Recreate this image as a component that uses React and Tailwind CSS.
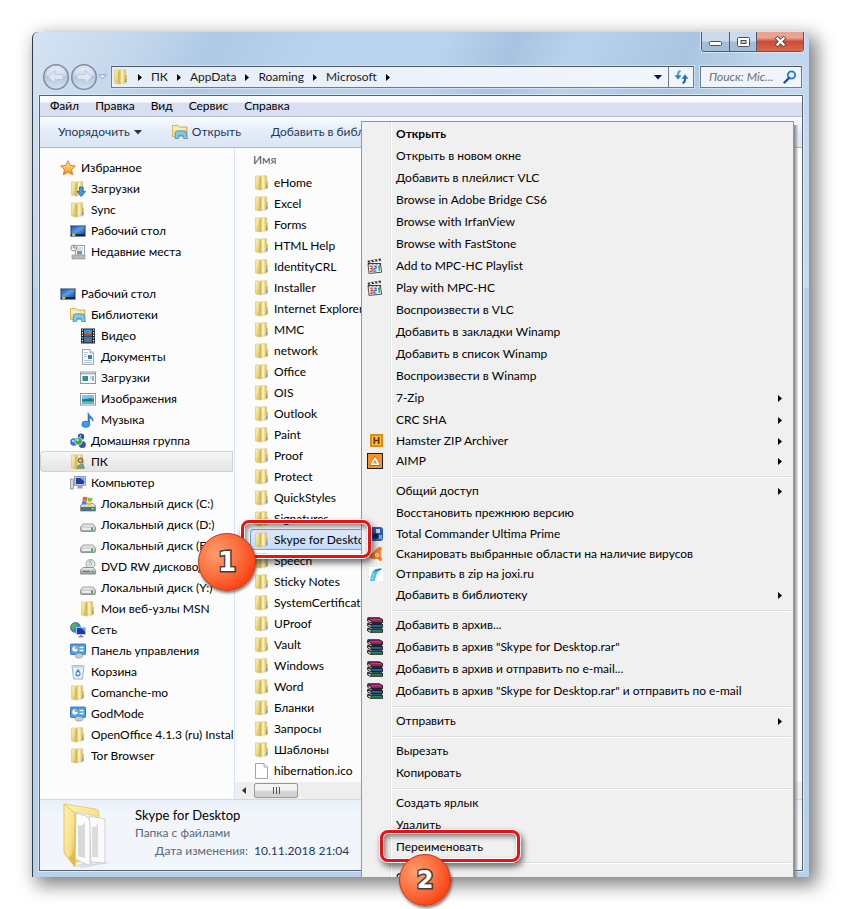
import React from "react";

function Defs() {
  return (
    <svg className="absolute size-0" aria-hidden="true">
      <defs>
        <linearGradient id="fold" x1="0" x2="1" y1="0" y2="1">
          <stop offset="0" stopColor="#fbf3b4" />
          <stop offset="0.5" stopColor="#eed981" />
          <stop offset="1" stopColor="#c9a63f" />
        </linearGradient>
        <linearGradient id="foldLight" x1="0" x2="1" y1="0" y2="0">
          <stop offset="0" stopColor="#e0c565" />
          <stop offset="0.4" stopColor="#fdf8cf" />
          <stop offset="1" stopColor="#d9bb58" />
        </linearGradient>
        <linearGradient id="screen" x1="0" x2="1" y1="0" y2="1">
          <stop offset="0" stopColor="#1f57b8" />
          <stop offset="0.5" stopColor="#5b9be8" />
          <stop offset="1" stopColor="#1c4aa0" />
        </linearGradient>
        <linearGradient id="star" x1="0" x2="0" y1="0" y2="1">
          <stop offset="0" stopColor="#fff3a0" />
          <stop offset="1" stopColor="#f58a16" />
        </linearGradient>
        <linearGradient id="drive" x1="0" x2="0" y1="0" y2="1">
          <stop offset="0" stopColor="#f6f6f6" />
          <stop offset="1" stopColor="#9c9c9c" />
        </linearGradient>
        <linearGradient id="ring" x1="0" x2="0" y1="0" y2="1">
          <stop offset="0" stopColor="#dfe9f5" />
          <stop offset="0.5" stopColor="#b7c6db" />
          <stop offset="1" stopColor="#d3e2f2" />
        </linearGradient>
        <linearGradient id="bigFold" x1="0" x2="1" y1="0" y2="1">
          <stop offset="0" stopColor="#fff3b0" />
          <stop offset="0.6" stopColor="#f7e08a" />
          <stop offset="1" stopColor="#dfb443" />
        </linearGradient>
      </defs>
    </svg>
  );
}

function Svg({ children, className = "size-4" }) {
  return (
    <svg viewBox="0 0 16 16" className={`${className} shrink-0`} aria-hidden="true">
      {children}
    </svg>
  );
}

function FolderShape() {
  return (
    <>
      <path d="M1.5 1 H7 V15 L1.5 14 Z" fill="url(#fold)" stroke="#d8c06a" strokeWidth="0.6" />
      <path d="M6.5 1.5 L8 0.8 H12.5 V14 H6.5 Z" fill="url(#foldLight)" stroke="#cdb257" strokeWidth="0.5" />
      <path d="M5 3 L7.5 1.5 V15.5 L5 14.5 Z" fill="#d9bd5c" />
      <path d="M12 6 H13.8 V13 L12 14 Z" fill="#d8ba50" />
      <path d="M12.8 10 V13" stroke="#4b9be0" strokeWidth="1" />
    </>
  );
}

const icons = {
  folder: <FolderShape />,
  downloads: (
    <>
      <FolderShape />
      <path d="M9.5 6 H13 V10.5 H15.5 L11.2 15.6 L7 10.5 H9.5 Z" fill="#3f9be8" stroke="#1763b3" strokeWidth="0.8" />
    </>
  ),
  user: (
    <>
      <FolderShape />
      <circle cx="10.5" cy="6.5" r="2.4" fill="#d9a988" stroke="#5d4630" strokeWidth="0.9" />
      <path d="M7 14.5 C7 9 14 9 14.5 14.5 Z" fill="#6fa58b" stroke="#5f7a6c" strokeWidth="0.5" />
    </>
  ),
  star: (
    <path
      d="M8 0.8 L10.2 5.4 L15.4 6 L11.6 9.5 L12.6 14.8 L8 12.1 L3.4 14.8 L4.4 9.5 L0.6 6 L5.8 5.4 Z"
      fill="url(#star)"
      stroke="#d9731c"
      strokeWidth="0.9"
    />
  ),
  desktop: (
    <>
      <rect x="0.5" y="2.5" width="15" height="11" fill="#29394f" stroke="#8c9bb0" strokeWidth="0.8" />
      <rect x="1.5" y="3.3" width="13" height="8" fill="url(#screen)" />
      <rect x="1" y="11.3" width="14" height="1.8" fill="#16222f" />
      <path d="M2 11 h2 v2 h-2z" fill="#8fd43f" />
      <path d="M4 11 h1.2 v2 h-1.2z" fill="#f3c531" />
    </>
  ),
  recent: (
    <>
      <rect x="5.5" y="1.5" width="9" height="10" fill="#fafafa" stroke="#9aa0a6" />
      <path d="M7 4 H13 M7 6 H13" stroke="#b6c3d3" />
      <rect x="7" y="7" width="5" height="3.5" fill="#5c9cd8" />
      <path d="M2 11 H15 V15 H2 Z" fill="#b8b8b8" stroke="#8d8d8d" strokeWidth="0.6" />
      <circle cx="3.8" cy="4" r="3" fill="#f4f4f4" stroke="#8a8a8a" />
      <path d="M3.8 2 V4 H5.4" stroke="#555" strokeWidth="0.8" fill="none" />
    </>
  ),
  library: (
    <>
      <path d="M0.5 1.5 H6 L7.5 3 H15 V12.5 H0.5 Z" fill="url(#fold)" stroke="#c9a941" strokeWidth="0.8" />
      <path d="M1.5 5 H14" stroke="#fff8cf" strokeWidth="1.2" />
      <path d="M3.5 8 C5 6.4 11 6.4 14 8 L15.4 14.5 H11.5 L11 11.3 H7 L6.5 14.5 H3 Z" fill="#7fc8f3" stroke="#3c8bc7" strokeWidth="0.8" />
    </>
  ),
  video: (
    <>
      <rect x="1" y="0.5" width="14" height="15" fill="#1b2229" />
      <path d="M2.4 1.5 V15 M13.6 1.5 V15" stroke="#e8eef2" strokeWidth="1.2" strokeDasharray="1.3 1.3" />
      <rect x="4" y="1.5" width="8" height="6" fill="#3f93d8" />
      <rect x="4" y="8.5" width="8" height="6" fill="#2f79bd" />
      <path d="M4 6 L7 4 L9 6.5 L12 3.5 V7.5 H4 Z M4 13 L7 11 L9 13 L12 10.5 V12 L4 14 Z" fill="#b5532c" />
    </>
  ),
  doc: (
    <>
      <path d="M2.5 0.5 H10 L13.5 4 V15.5 H2.5 Z" fill="#fbfcfd" stroke="#8f9aa5" strokeWidth="0.9" />
      <path d="M10 0.5 V4 H13.5" fill="#dde5ec" stroke="#8f9aa5" strokeWidth="0.8" />
      <path d="M4 3.5 H8 M4 5.5 H7 M4 7.5 H7 M4 11.5 H12 M4 13.5 H12" stroke="#9db3c6" strokeWidth="0.8" />
      <rect x="8" y="6" width="4" height="4" fill="#2e7fc4" />
    </>
  ),
  dlib: (
    <>
      <rect x="0.5" y="2" width="15" height="11.5" fill="#f6f8fa" stroke="#8d99a6" />
      <path d="M1 3.6 H15" stroke="#a3b3c6" strokeWidth="1.6" />
      <rect x="2.5" y="6" width="5.5" height="5" fill="#3d8a86" />
      <path d="M9.5 7 H12 M9.5 9 H12" stroke="#b4c0cc" />
      <path d="M13 6 V11" stroke="#2569b5" />
    </>
  ),
  image: (
    <>
      <rect x="0.5" y="2.5" width="15" height="11.5" fill="#fff" stroke="#8c98a4" />
      <rect x="2" y="4" width="12" height="8.5" fill="#79c3ee" />
      <path d="M2 8 C6 9.5 9 5.5 14 8.5 V12.5 H2 Z" fill="#1f7f78" />
      <path d="M2 10.5 H14 V12.5 H2 Z" fill="#5dbcd8" />
    </>
  ),
  music: (
    <>
      <path d="M8 0.5 C8.5 4 14 4.5 13 9.5 C12.5 7.2 11 6.4 9.5 6.2 V12.2 H8 Z" fill="#2c83d4" stroke="#1c5fa5" strokeWidth="0.5" />
      <ellipse cx="5.8" cy="12.2" rx="4" ry="3.2" fill="#419be6" stroke="#1c5fa5" strokeWidth="0.6" />
    </>
  ),
  homegroup: (
    <>
      <circle cx="4" cy="9" r="3.8" fill="#3c6fd0" />
      <circle cx="11" cy="3.8" r="3.2" fill="#2c4fae" />
      <circle cx="12.3" cy="11.5" r="3.5" fill="#3054b4" />
      <circle cx="8.5" cy="8.2" r="3.8" fill="#3aa646" stroke="#e8f3ff" strokeWidth="0.7" />
      <circle cx="7.6" cy="7" r="1.4" fill="#a8e5a0" />
      <circle cx="3" cy="8" r="1.2" fill="#b9d2ff" />
      <circle cx="10.4" cy="2.8" r="0.9" fill="#b9d2ff" />
    </>
  ),
  computer: (
    <>
      <rect x="0.5" y="4" width="3" height="10" fill="#d5d8dc" stroke="#7f868e" strokeWidth="0.7" />
      <rect x="4.5" y="1.5" width="11" height="9" fill="#e7e9ec" stroke="#84898f" strokeWidth="0.8" />
      <rect x="5.8" y="2.8" width="8.5" height="6.4" fill="#1c3fae" />
      <path d="M10 2.8 H14.3 V6.5 Z" fill="#7aa5ee" />
      <path d="M8 10.5 H12 L13 13.5 H7 Z" fill="#9aa0a8" />
    </>
  ),
  osdrive: (
    <>
      <path d="M0.5 9.5 L3 7.5 H13 L15.5 9.5 V15 H0.5 Z" fill="url(#drive)" stroke="#6f7378" strokeWidth="0.7" />
      <path d="M1 11 H15 V15 H1 Z" fill="#4d7380" />
      <rect x="11.5" y="12" width="2.5" height="1.6" fill="#7be04a" />
      <path d="M3 1.2 C5 0.2 6 0.8 7.6 1.4 L6.8 5 C5 4.2 4 4.2 2.4 5 Z" fill="#e8602c" />
      <path d="M8.2 1.6 C9.6 2.2 11 2.2 12.6 1.4 L11.8 5 C10 5.8 9 5.6 7.5 5 Z" fill="#7fbf3a" />
      <path d="M2.2 5.6 C4 4.8 5 5 6.7 5.6 L6 9 C4.5 8.4 3 8.4 1.6 9 Z" fill="#3f86dc" />
      <path d="M7.3 5.9 C9 6.5 10 6.4 11.6 5.7 L10.8 9 C9.4 9.8 8 9.6 6.6 9.1 Z" fill="#f4bf2d" />
    </>
  ),
  drive: (
    <>
      <path d="M0.6 10 L3 7 H13 L15.4 10 V13.5 Q15.4 14.5 14 14.5 H2 Q0.6 14.5 0.6 13.5 Z" fill="url(#drive)" stroke="#84888c" strokeWidth="0.8" />
      <path d="M2 10.8 H14 V13 H2 Z" fill="#e9ebec" />
      <rect x="11" y="10.4" width="2" height="2.8" fill="#3cb644" />
    </>
  ),
  dvd: (
    <>
      <circle cx="10.5" cy="5" r="4.5" fill="#dfe6e4" stroke="#8e9694" strokeWidth="0.8" />
      <path d="M10.5 5 L8 1.5 L12 0.8 Z" fill="#8fd7a5" />
      <circle cx="10.5" cy="5" r="1.2" fill="#fff" stroke="#888" strokeWidth="0.6" />
      <path d="M0.6 11 L3 8.5 H13 L15.4 11 V15 H0.6 Z" fill="url(#drive)" stroke="#777b7f" strokeWidth="0.8" />
      <path d="M2.5 12.3 H10" stroke="#55595d" />
      <rect x="11.5" y="11.7" width="2" height="2" fill="#3cb644" />
    </>
  ),
  network: (
    <>
      <circle cx="5.5" cy="5.5" r="5" fill="#3b86d8" stroke="#22589f" strokeWidth="0.6" />
      <path d="M2 3 C4 0.5 6 1.5 7 3 C6 5 4 5 3.4 8 C1.6 7 1 5 2 3 Z" fill="#58b947" />
      <rect x="6.5" y="5.5" width="9" height="7" fill="#1c3d9e" stroke="#c2cad4" strokeWidth="0.9" />
      <path d="M11 6 H15 V9.5 Z" fill="#6b96e4" />
      <path d="M10 13 H12 V14 H13.5 V15.5 H8.5 V14 H10 Z" fill="#8b929a" />
    </>
  ),
  control: (
    <>
      <rect x="0.5" y="1" width="15" height="10.5" rx="0.8" fill="#4aa0e6" stroke="#2568a9" strokeWidth="0.8" />
      <circle cx="5" cy="6" r="2.8" fill="#e8f4fd" />
      <path d="M5 6 V3.2 A2.8 2.8 0 0 1 7.8 6 Z" fill="#f08a1c" />
      <path d="M9.5 4.5 H13.5 M9.5 7.5 H13.5" stroke="#fff" strokeWidth="1.3" />
      <ellipse cx="9" cy="12.8" rx="4" ry="2.4" fill="#c8cdd3" stroke="#8c9299" strokeWidth="0.6" />
    </>
  ),
  bin: (
    <>
      <path d="M2 1.5 H14 L12.4 15 H3.6 Z" fill="#e8eff6" stroke="#98a8b9" strokeWidth="0.9" />
      <path d="M2 1.5 H14 L13.6 3.8 H2.4 Z" fill="#c4d2df" />
      <path d="M6 9 L8 6 L10 9 M10.4 9.5 L9 11.6 H6.6 L5.6 9.6" fill="none" stroke="#3d83d6" strokeWidth="1.3" />
    </>
  ),
  file: (
    <>
      <path d="M1.5 0.5 H10 L13.5 4 V15.5 H1.5 Z" fill="#fdfdfd" stroke="#9b9b9b" strokeWidth="0.9" />
      <path d="M10 0.5 V4 H13.5" fill="#ececec" stroke="#9b9b9b" strokeWidth="0.8" />
    </>
  ),
  mpc: (
    <>
      <path d="M0.6 2.8 L13.6 0.6 L14 2.8 L1 4.8 Z" fill="#2c2c2c" />
      <path d="M3 2.4 L4.6 4 M6.6 1.8 L8.2 3.5 M10.2 1.2 L11.8 2.9" stroke="#fff" strokeWidth="1.4" />
      <path d="M1 5.5 H13.4 L14.6 14.2 L2 15.4 Z" fill="#fff" stroke="#3a3a3a" strokeWidth="0.9" />
      <path d="M1 5.8 H14" stroke="#333" strokeWidth="1.6" strokeDasharray="2.2 1.5" />
      <path d="M2.6 8.2 H5 V13.4 H2.8 M3 10.6 H5" fill="none" stroke="#d9452c" strokeWidth="1.3" />
      <path d="M6.6 8.2 H9.1 V10.5 H7 V13.2 H9.5" fill="none" stroke="#2f6fd0" strokeWidth="1.3" />
      <path d="M11 8.8 L12.2 8 V13" fill="none" stroke="#2f9b4b" strokeWidth="1.4" />
    </>
  ),
  hamster: (
    <>
      <rect x="3" y="1" width="13" height="13" fill="#e08a1c" />
      <rect x="5" y="3" width="9" height="9" fill="#f8c23c" />
      <path d="M7.3 4 V11 M11.7 4 V11 M7.3 7.5 H11.7" stroke="#6b3407" strokeWidth="1.7" />
    </>
  ),
  aimp: (
    <>
      <rect x="0.5" y="0.5" width="15" height="15" fill="#fb9220" stroke="#1d1d1d" />
      <path d="M8 3.4 L13 12.2 H3 Z" fill="#7d6a51" stroke="#7d6a51" strokeWidth="1" strokeLinejoin="round" />
      <path d="M8 5 L11.6 11.2 H4.4 Z" fill="#e59246" stroke="#fff" strokeWidth="1.6" strokeLinejoin="round" />
    </>
  ),
  tc: (
    <>
      <rect x="3" y="1" width="13" height="14" rx="3" fill="#2f5caa" />
      <path d="M9 3 H13 V7 H9 Z" fill="#c3d3ee" />
      <circle cx="8.5" cy="10" r="2.8" fill="#12244e" />
      <path d="M12 9 H15 V13 H12 Z" fill="#7f9fd6" />
    </>
  ),
  avast: (
    <>
      <path
        d="M13.4 0.8 C15.6 1.2 15.2 3.6 13.5 5.5 C14 7.5 14 9 13.3 10.3 C15.4 12.3 15.7 14.8 13.6 15 C12 15.1 11.5 13.4 10 12.8 C8 13.4 5 13.2 3.4 12 C1.6 11 0.6 9 2.2 7.8 C3.6 6.8 5.8 7.4 6.8 6 C8.4 3.6 10.8 0.8 13.4 0.8 Z"
        fill="#f58220"
      />
      <circle cx="9.8" cy="8.8" r="1.9" fill="#fff" />
      <circle cx="9.8" cy="8.8" r="0.9" fill="#f58220" />
    </>
  ),
  joxi: (
    <>
      <rect x="2" y="1" width="14" height="14" fill="#fff" />
      <path d="M3 15 C3.5 11 4.5 9.5 5 7 C6 2.8 11 2 15 2.6 L12 5.6 C9.5 6.6 9 11 7.5 15 Z" fill="#4dbbe0" />
      <path d="M8 5 C10 3.6 12 3.2 14.5 3" stroke="#1b6f99" strokeWidth="1.2" fill="none" />
      <path d="M5 14 C6 11 6.5 9 7 7" stroke="#b9e8f6" strokeWidth="0.9" fill="none" />
    </>
  ),
  rar: (
    <>
      <path d="M0.8 0.8 H12.5 L15.6 2.6 V5.6 H4 L0.8 4 Z" fill="#9c1d68" stroke="#111" strokeWidth="0.9" />
      <path d="M0.8 6 L4 7.5 H15.6 V10.4 H4 L0.8 9 Z" fill="#1e63b4" stroke="#111" strokeWidth="0.9" />
      <path d="M0.8 11 L4 12.3 H15.6 V15.3 H4 L0.8 14 Z" fill="#1c8a57" stroke="#111" strokeWidth="0.9" />
      <path d="M1 2.4 L4 4 V6 L1 4.6 Z M1 7.2 L4 8.6 V10.6 L1 9.3 Z M1 12 L4 13.3 V15.4 L1 14.2 Z" fill="#fff" stroke="#111" strokeWidth="0.7" />
      <path d="M4 2.6 H14" stroke="#d24a96" strokeWidth="0.8" />
      <path d="M4.5 6.4 H15 M4.5 11.2 H15" stroke="#111" strokeWidth="1" />
    </>
  ),
};

const navItems = [
  { icon: "star", label: "Избранное", level: 0 },
  { icon: "downloads", label: "Загрузки", level: 1 },
  { icon: "folder", label: "Sync", level: 1 },
  { icon: "desktop", label: "Рабочий стол", level: 1 },
  { icon: "recent", label: "Недавние места", level: 1 },
  null,
  { icon: "desktop", label: "Рабочий стол", level: 0 },
  { icon: "library", label: "Библиотеки", level: 1 },
  { icon: "video", label: "Видео", level: 2 },
  { icon: "doc", label: "Документы", level: 2 },
  { icon: "dlib", label: "Загрузки", level: 2 },
  { icon: "image", label: "Изображения", level: 2 },
  { icon: "music", label: "Музыка", level: 2 },
  { icon: "homegroup", label: "Домашняя группа", level: 1 },
  { icon: "user", label: "ПК", level: 1, selected: true },
  { icon: "computer", label: "Компьютер", level: 1 },
  { icon: "osdrive", label: "Локальный диск (C:)", level: 2 },
  { icon: "drive", label: "Локальный диск (D:)", level: 2 },
  { icon: "drive", label: "Локальный диск (E:)", level: 2 },
  { icon: "dvd", label: "DVD RW дисковод", level: 2 },
  { icon: "drive", label: "Локальный диск (Y:)", level: 2 },
  { icon: "folder", label: "Мои веб-узлы MSN", level: 2 },
  { icon: "network", label: "Сеть", level: 1 },
  { icon: "control", label: "Панель управления", level: 1 },
  { icon: "bin", label: "Корзина", level: 1 },
  { icon: "folder", label: "Comanche-mo", level: 1 },
  { icon: "control", label: "GodMode", level: 1 },
  { icon: "folder", label: "OpenOffice 4.1.3 (ru) Instal", level: 1 },
  { icon: "folder", label: "Tor Browser", level: 1 },
];

const files = [
  "eHome", "Excel", "Forms", "HTML Help", "IdentityCRL", "Installer", "Internet Explorer", "MMC",
  "network", "Office", "OIS", "Outlook", "Paint", "Proof", "Protect", "QuickStyles", "Signatures",
  "Skype for Desktop", "Speech", "Sticky Notes", "SystemCertificates", "UProof", "Vault", "Windows",
  "Word", "Бланки", "Запросы", "Шаблоны", "hibernation.ico",
];

const menuItems = [
  { label: "Открыть", bold: true },
  { label: "Открыть в новом окне" },
  { label: "Добавить в плейлист VLC" },
  { label: "Browse in Adobe Bridge CS6" },
  { label: "Browse with IrfanView" },
  { label: "Browse with FastStone" },
  { label: "Add to MPC-HC Playlist", icon: "mpc" },
  { label: "Play with MPC-HC", icon: "mpc" },
  { label: "Воспроизвести в VLC" },
  { label: "Добавить в закладки Winamp" },
  { label: "Добавить в список Winamp" },
  { label: "Воспроизвести в Winamp" },
  { label: "7-Zip", sub: true },
  { label: "CRC SHA", sub: true },
  { label: "Hamster ZIP Archiver", icon: "hamster", sub: true, short: true },
  { label: "AIMP", icon: "aimp", sub: true, short: true },
  null,
  { label: "Общий доступ", sub: true },
  { label: "Восстановить прежнюю версию" },
  { label: "Total Commander Ultima Prime", icon: "tc", short: true },
  { label: "Сканировать выбранные области на наличие вирусов", icon: "avast", short: true },
  { label: "Отправить в zip на joxi.ru", icon: "joxi", short: true },
  { label: "Добавить в библиотеку", sub: true },
  null,
  { label: "Добавить в архив...", icon: "rar" },
  { label: 'Добавить в архив "Skype for Desktop.rar"', icon: "rar" },
  { label: "Добавить в архив и отправить по e-mail...", icon: "rar" },
  { label: 'Добавить в архив "Skype for Desktop.rar" и отправить по e-mail', icon: "rar" },
  null,
  { label: "Отправить", sub: true },
  null,
  { label: "Вырезать" },
  { label: "Копировать" },
  null,
  { label: "Создать ярлык" },
  { label: "Удалить" },
  { label: "Переименовать" },
  null,
  { label: "Свойства" },
];

const indent = ["pl-5", "pl-[30px]", "pl-10"];

function CrumbArrow() {
  return (
    <svg viewBox="0 0 4 7" className="h-[7px] w-1 shrink-0" aria-hidden="true">
      <path d="M0 0 L4 3.5 L0 7 Z" fill="#000" />
    </svg>
  );
}

function WindowControls() {
  return (
    <div className="mr-[5px] flex h-5 self-end overflow-hidden rounded-b border border-t-0 border-[#4f5c6b] shadow-[0_0_0_1px_#d6e5f5]">
      <button aria-label="Свернуть" className="flex w-7 items-center justify-center border-r border-[#4f5c6b] bg-linear-to-b from-[#cbdbec] from-45% to-[#a5bcd6] to-55%">
        <svg viewBox="0 0 13 5" className="h-[5px] w-[13px] translate-y-0.5">
          <rect x="0.5" y="0.5" width="12" height="4" rx="1" fill="#fff" stroke="#4a4f59" />
        </svg>
      </button>
      <button aria-label="Развернуть" className="flex w-[27px] items-center justify-center border-r border-[#4f5c6b] bg-linear-to-b from-[#cbdbec] from-45% to-[#a5bcd6] to-55%">
        <svg viewBox="0 0 13 10" className="h-2.5 w-[13px]">
          <rect x="0.5" y="0.5" width="12" height="9" rx="1" fill="#fff" stroke="#4a4f59" />
          <rect x="4" y="3.5" width="5" height="3" fill="#b7cbe1" stroke="#4a4f59" />
        </svg>
      </button>
      <button aria-label="Закрыть" className="flex w-[46px] items-center justify-center bg-linear-to-b from-[#e9a394] from-30% via-[#cc4b35] via-50% to-[#d9694c]">
        <svg viewBox="0 0 13 11" className="h-[11px] w-[13px]">
          <path d="M3.5 2.5 L9.5 8.5 M9.5 2.5 L3.5 8.5" stroke="#51424a" strokeWidth="4" strokeLinecap="square" />
          <path d="M3.5 2.5 L9.5 8.5 M9.5 2.5 L3.5 8.5" stroke="#fff" strokeWidth="2.4" strokeLinecap="square" />
        </svg>
      </button>
    </div>
  );
}

function NavButtons() {
  return (
    <div className="flex items-center">
      <button aria-label="Назад">
        <svg viewBox="0 0 28 28" className="size-7">
          <circle cx="14" cy="14" r="12.3" fill="url(#ring)" stroke="#7d8da3" strokeWidth="1.5" />
          <path d="M4 12 A10.5 10.5 0 0 1 24 12 C18 15 10 15 4 12 Z" fill="#fff" opacity="0.35" />
          <path d="M6 14 L13 7.5 V11.5 H21 V16.5 H13 V20.5 Z" fill="#dde6f1" stroke="#b5c3d5" strokeWidth="0.8" />
        </svg>
      </button>
      <button aria-label="Вперёд">
        <svg viewBox="0 0 28 28" className="size-7">
          <circle cx="14" cy="14" r="12.3" fill="url(#ring)" stroke="#7d8da3" strokeWidth="1.5" />
          <path d="M4 12 A10.5 10.5 0 0 1 24 12 C18 15 10 15 4 12 Z" fill="#fff" opacity="0.35" />
          <path d="M22 14 L15 7.5 V11.5 H7 V16.5 H15 V20.5 Z" fill="#dde6f1" stroke="#b5c3d5" strokeWidth="0.8" />
        </svg>
      </button>
      <button aria-label="Журнал">
        <svg viewBox="0 0 9 6" className="h-1.5 w-[9px]">
          <path d="M0.7 0.7 H8.3 L4.5 5 Z" fill="#dfeaf6" stroke="#8ea6c4" />
        </svg>
      </button>
    </div>
  );
}

function AddressRow() {
  return (
    <div className="mt-3.5 flex h-[22px] items-center gap-1 pr-[7px] pl-[9px]">
      <NavButtons />
      <div className="flex h-[22px] min-w-0 flex-1 items-stretch border border-[#6d7b8b] border-t-[#4e5864] bg-linear-to-r from-[#e6eef8] to-[#f1f6fb] shadow-[0_0_0_1px_#d3e2f2]">
        <div className="flex flex-1 items-center gap-[9px] pl-px">
          <Svg>{icons.folder}</Svg>
          <CrumbArrow />
          {["ПК", "AppData", "Roaming", "Microsoft"].map((c) => (
            <React.Fragment key={c}>
              <button className="leading-5 text-[#1b1b1b]">{c}</button>
              <CrumbArrow />
            </React.Fragment>
          ))}
        </div>
        <button aria-label="Предыдущие расположения" className="flex w-5 items-center justify-center">
          <svg viewBox="0 0 8 5" className="h-[5px] w-2">
            <path d="M0 0 H8 L4 4.5 Z" fill="#00105e" />
          </svg>
        </button>
        <button aria-label="Обновить" className="flex w-[25px] items-center justify-center border-l border-[#6d7b8b]">
          <svg viewBox="0 0 15 14" className="h-3.5 w-[15px]">
            <path d="M6.5 1 C4.2 1.6 3.8 3.5 4 6" fill="none" stroke="#45a0dd" strokeWidth="2" />
            <path d="M0.5 5.2 H7.6 L4 9.4 Z" fill="#2f7fc9" />
            <path d="M8.5 13 C10.8 12.4 11.3 10.5 11 8" fill="none" stroke="#1d5ca8" strokeWidth="2" />
            <path d="M7.4 8.8 H14.5 L11 4.6 Z" fill="#2a6fbb" />
          </svg>
        </button>
      </div>
      <label className="ml-0.5 flex h-[22px] w-[102px] items-center border border-[#6d7b8b] border-t-[#4e5864] bg-[#eff5fb] pr-1 pl-2 shadow-[0_0_0_1px_#d3e2f2]">
        <input aria-label="Поиск" placeholder="Поиск: Mic..." className="w-0 min-w-0 flex-1 bg-transparent italic outline-none placeholder:text-[#6e6e6e]" />
        <svg viewBox="0 0 14 14" className="size-3.5 shrink-0">
          <circle cx="8.5" cy="5" r="3.7" fill="#dcecfa" stroke="#2f78c8" strokeWidth="1.8" />
          <path d="M6 8 L1.5 12.5" stroke="#1f4fa0" strokeWidth="2.4" strokeLinecap="round" />
        </svg>
      </label>
    </div>
  );
}

function Toolbar() {
  return (
    <div className="flex h-[31px] items-center overflow-hidden border-b border-[#a5b5cb] bg-linear-to-b from-[#fafcff] from-0% via-[#e3ecf8] via-50% to-[#dbe6f4] pl-[18px] whitespace-nowrap text-[#1e395b]">
      <button className="flex items-center gap-1">
        Упорядочить
        <svg viewBox="0 0 8 5" className="h-[5px] w-2">
          <path d="M0 0 H8 L4 4.5 Z" fill="#1e395b" />
        </svg>
      </button>
      <button className="ml-[30px] flex items-center gap-1">
        <Svg>{icons.library}</Svg>
        Открыть
      </button>
      <button className="ml-[30px]">Добавить в библиотеку</button>
    </div>
  );
}

function NavPane() {
  return (
    <nav className="w-[195px] shrink-0 overflow-hidden border-r border-[#d6e5f5] pt-[9px] pr-px">
      {navItems.map((item, i) =>
        item ? (
          <a
            key={i}
            href="#"
            className={`flex h-[21px] items-center gap-[5px] overflow-hidden whitespace-nowrap ${indent[item.level]} ${
              item.selected ? "rounded-l-sm bg-linear-to-b from-[#f7f7f7] to-[#e3e3e3] shadow-[inset_0_0_0_1px_#d4d4d4]" : ""
            }`}
          >
            <Svg>{icons[item.icon]}</Svg>
            {item.label}
          </a>
        ) : (
          <div key={i} className="h-[21px]" />
        )
      )}
    </nav>
  );
}

function FileList() {
  return (
    <main className="flex min-w-0 flex-1 flex-col overflow-hidden">
      <div className="flex h-6 items-center pl-[18px] text-[#4c607a]">Имя</div>
      <ul className="pr-6 pl-[15px]">
        {files.map((name) => (
          <li
            key={name}
            className={`flex h-[21px] items-center gap-1 pl-1 whitespace-nowrap ${
              name === "Skype for Desktop"
                ? "rounded-sm bg-linear-to-b from-[#dcebfc] to-[#c1dbfc] shadow-[inset_0_0_0_1px_#7da2ce]"
                : ""
            }`}
          >
            <Svg>{name === "hibernation.ico" ? icons.file : icons.folder}</Svg>
            {name}
          </li>
        ))}
      </ul>
      <div className="mt-auto flex h-[17px] items-center bg-[#eeeeee] pl-[7px]">
        <svg viewBox="0 0 4 7" className="h-[7px] w-1">
          <path d="M4 0 L0 3.5 L4 7 Z" fill="#333" />
        </svg>
        <div className="ml-2 flex h-[15px] w-11 items-center justify-center gap-0.5 rounded-xs border border-[#979797] bg-linear-to-b from-[#f4f4f4] from-45% to-[#d2d2d2] to-60%">
          <span className="h-[7px] w-px bg-[#555]" />
          <span className="h-[7px] w-px bg-[#555]" />
          <span className="h-[7px] w-px bg-[#555]" />
        </div>
      </div>
    </main>
  );
}

function DetailsPane() {
  return (
    <footer className="flex h-[71px] border-t border-[#c9d8ec] bg-linear-to-b from-[#e9f0fa] to-[#f2f6fb] to-20% pl-[22px]">
      <svg viewBox="0 0 48 66" className="mt-[3px] h-[66px] w-12 shrink-0" aria-hidden="true">
        <path d="M12 62 L40 57 L47 60 L20 65 Z" fill="#cfd5dd" opacity="0.7" />
        <path d="M2 1 L34 6 Q37 7 37 10 V50 L13 60 Z" fill="url(#bigFold)" stroke="#dcc064" strokeWidth="0.7" />
        <path d="M14 9 L34 13 V62 L14 56 Z" fill="#f4f4f4" stroke="#c8c8c8" strokeWidth="0.6" />
        <path d="M27 13 L43 16 V60 L29 59 Z" fill="#fbfbfb" stroke="#c2c2c2" strokeWidth="0.7" />
        <path d="M30 24 Q35 25 36 18 V54 H30 Z" fill="#dcdcdc" />
        <path d="M14 10 L24 13 Q28 15 28 20 V63 L13 56 Z" fill="#fcfcfc" stroke="#bdbdbd" strokeWidth="0.7" />
        <path d="M16 22 Q21 24 23 18 V55 L16 53 Z" fill="#d9d9d9" />
        <path d="M2 1 L13 10 V64 L2 50 Z" fill="url(#bigFold)" stroke="#dcb94d" strokeWidth="0.8" />
        <path d="M12.5 42 V63 L6 55 C11 53 12 48 12.5 42 Z" fill="#e6bb45" />
      </svg>
      <div className="pt-1.5 pl-[25px]">
        <div className="text-[13px] leading-[18px]">Skype for Desktop</div>
        <div className="leading-[18px] text-[#5a6779]">Папка с файлами</div>
        <div className="flex gap-1.5 pl-5 leading-[18px]">
          <span className="text-[#5a6779]">Дата изменения:</span>
          <span className="text-[#1e395b]">10.11.2018 21:04</span>
        </div>
      </div>
    </footer>
  );
}

function ContextMenu() {
  return (
    <div
      role="menu"
      className="absolute top-[89px] right-[15px] bottom-0 left-[328px] overflow-hidden border border-b-0 border-[#979797] bg-[#f0f0f0] bg-[linear-gradient(90deg,transparent_28px,#e2e3e3_28px,#e2e3e3_29px,#fff_29px,#fff_30px,transparent_30px)] pt-px"
    >
      {menuItems.map((item, i) =>
        item ? (
          <button
            key={i}
            role="menuitem"
            className={`flex w-full items-center pr-[11px] pl-[5px] text-left whitespace-nowrap ${item.short ? "h-5" : "h-[22px]"} ${
              item.bold ? "font-bold" : ""
            }`}
          >
            <span className="mr-[13px] size-4 shrink-0">{item.icon && <Svg>{icons[item.icon]}</Svg>}</span>
            <span className="flex-1">{item.label}</span>
            {item.sub && <CrumbArrow />}
          </button>
        ) : (
          <div key={i} role="separator" className="pt-1 pr-0.5 pb-0.5 pl-[30px] first-of-type:pt-[5px]">
            <div className="border-t border-b border-t-[#dedede] border-b-white" />
          </div>
        )
      )}
    </div>
  );
}

function Frame({ className }) {
  return (
    <div
      className={`pointer-events-none absolute rounded-lg border-[3px] border-[#ec1013] shadow-[0_0_0_1px_#fff,2px_4px_6px_1px_rgba(0,0,0,0.55),inset_0_0_0_1px_#fff,inset_2px_3px_5px_1px_rgba(0,0,0,0.45)] ${className}`}
    />
  );
}

function Badge({ n, className }) {
  return (
    <div
      className={`absolute flex items-center justify-center rounded-full border border-[#c23512] bg-[radial-gradient(circle_at_32%_35%,#ff9e6c,#fb6c3c_45%,#fb4416_75%,#f23a0c)] font-['DejaVu_Sans',sans-serif] font-bold text-white shadow-[1px_2px_3px_rgba(0,0,0,0.5)] [-webkit-text-stroke:3px_#3f3f3f] [paint-order:stroke_fill] ${className}`}
    >
      {n}
    </div>
  );
}

export default function App() {
  return (
    <div className="flex min-h-screen bg-white p-8 font-['Lato','Noto_Sans',sans-serif] text-xs text-black">
      <Defs />
      <div className="relative flex min-w-0 flex-1 flex-col rounded-t-md border-l border-[#2d3a49] bg-[#b7d1eb] bg-[linear-gradient(115deg,#d5e3f2_0px,#c5d8ec_90px,#aecae6_170px,#b9d3ec_260px,#b9d3ec_380px,#a6c3e0_440px,#b9d3ec_500px,#a9c5e1_600px,#bfd6ed_680px,#c8dcf0_100%)] bg-[length:100%_256px] bg-no-repeat shadow-[6px_6px_18px_2px_rgba(0,0,0,0.5)]">
        <WindowControls />
        <AddressRow />
        <div className="mt-[7px] mr-1.5 mb-1.5 ml-1.5 flex flex-1 flex-col border border-[#566373] bg-[#fcfcfc] shadow-[0_0_0_1px_#dbe8f5]">
          <div className="flex h-[21px] items-center gap-4 border-b border-[#b7c0d8] bg-linear-to-b from-[#fafbfe] from-30% to-[#d9dff0] to-35% pl-2.5">
            {["Файл", "Правка", "Вид", "Сервис", "Справка"].map((m) => (
              <button key={m}>{m}</button>
            ))}
          </div>
          <Toolbar />
          <div className="flex flex-1">
            <NavPane />
            <FileList />
          </div>
          <DetailsPane />
        </div>
        <ContextMenu />
        <div className="absolute top-[93px] right-[11px] bottom-0 w-1 bg-linear-to-r from-[#7c7c7c]/90 to-[#9a9a9a]/20" />
        <Frame className="top-[488px] left-[208px] h-[38px] w-[130px]" />
        <Badge n="1" className="top-[501px] left-[165px] size-[58px] text-[26px]" />
        <Frame className="top-[798px] left-[347px] h-8 w-[140px]" />
        <Badge n="2" className="top-[822px] left-[366px] size-[52px] text-2xl" />
      </div>
    </div>
  );
}
